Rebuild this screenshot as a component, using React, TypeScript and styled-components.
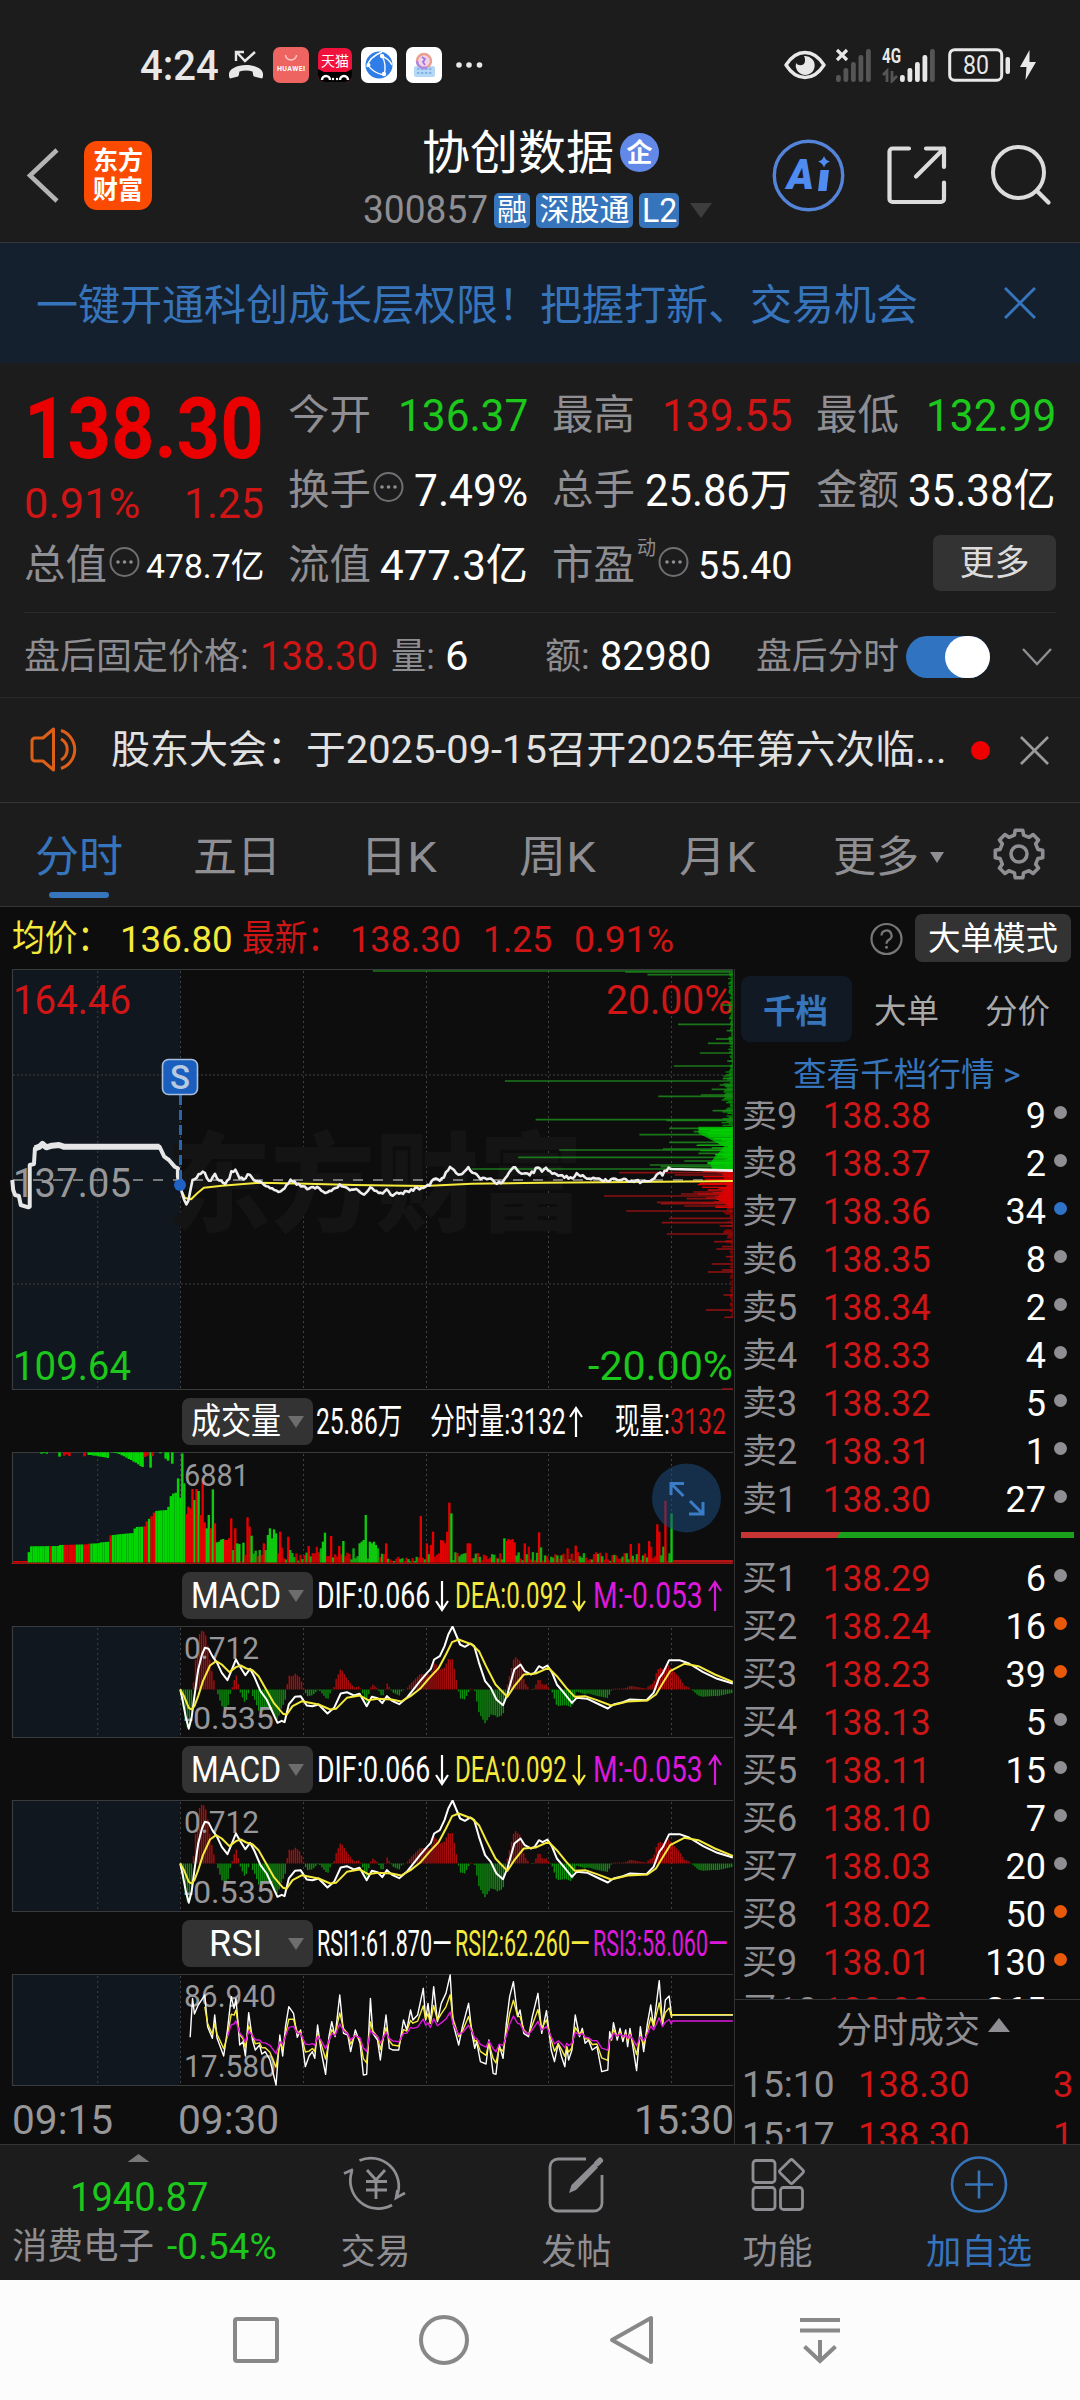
import { ReactNode, useLayoutEffect, useRef, useState } from "react"
import styled, { createGlobalStyle } from "styled-components"

const RED = '#cf1515'
const GREEN = '#1bc81b'
const GREY = '#8e8e93'
const BLUE = '#3674bc'
const YELLOW = '#f5ea3c'
const PINK = '#dd18dd'

const GlobalStyle = createGlobalStyle`
    * { box-sizing: border-box; }
    body {
        margin: 0;
        background: #1c1c1c;
        font-family: Roboto, "Noto Sans CJK SC", sans-serif;
    }
    svg { display: block; flex: none; }
`

/* ---------- text that squeezes itself into a fixed width ---------- */

interface FitProps {
    w: number
    size: number
    color?: string
    weight?: number
    ml?: number
    children: ReactNode
}
const FitBox = styled.span<{ $w: number, $size: number, $color: string, $weight: number, $ml: number }>`
    display: block;
    flex: none;
    width: ${props => props.$w}px;
    margin-left: ${props => props.$ml}px;
    font-size: ${props => props.$size}px;
    font-weight: ${props => props.$weight};
    color: ${props => props.$color};
    line-height: 1;
    white-space: pre;
`
const FitInner = styled.span`
    display: inline-block;
    transform-origin: 0 50%;
`
const Fit = ({ w, size, color = '#fff', weight = 400, ml = 0, children }: FitProps) => {
    const ref = useRef<HTMLSpanElement>(null)
    const [scale, setScale] = useState(1)

    useLayoutEffect(() => {
        if (ref.current) setScale(w / ref.current.offsetWidth)
    }, [w, children])

    return <FitBox $w={w} $size={size} $color={color} $weight={weight} $ml={ml}>
        <FitInner ref={ref} style={{ transform: `scaleX(${scale})` }}>{children}</FitInner>
    </FitBox>
}

/* ---------- status bar ---------- */

const Screen = styled.div`
    width: 1080px;
    height: 2400px;
    display: flex;
    flex-direction: column;
    overflow: hidden;
    background: #1c1c1c;
`
const StatusBar = styled.div`
    height: 130px;
    flex: none;
    display: flex;
    align-items: center;
    justify-content: space-between;
    padding: 0 44px 0 140px;
`
const StatusGroup = styled.div<{ $gap: number }>`
    display: flex;
    align-items: center;
    gap: ${props => props.$gap}px;
    height: 40px;
`
const AppIcon = styled.div<{ $bg: string, $size: number }>`
    width: ${props => props.$size}px;
    height: ${props => props.$size}px;
    border-radius: 7px;
    overflow: hidden;
    background: ${props => props.$bg};
    flex: none;
`

const SIGNAL_HEIGHTS = [7, 14, 20, 27, 33]

const Signal = ({ lit, left, mark }: { lit: number, left: number, mark: ReactNode }) => (
    <svg width={54 - left} height="36" viewBox={`${left} 0 ${54 - left} 36`}>
        {SIGNAL_HEIGHTS.map((h, i) => (
            <rect key={i} x={18 + i * 7.5} y={35 - h} width="4.8" height={h} rx="2.2" fill={i < lit ? '#e8e8e8' : '#555'} />
        ))}
        {mark}
    </svg>
)

const Status = () => (
    <StatusBar>
        <StatusGroup $gap={9}>
            <Fit w={79} size={43} color="#e8e8e8" weight={500}>4:24</Fit>
            <svg width="36" height="30" viewBox="0 0 36 30">
                <path d="M8 11V2h8M9 2.500l8 8.500L27 2" fill="none" stroke="#e8e8e8" strokeWidth="2.400" />
                <path d="M1 24c0-5 8-9 17-9s17 4 17 9c0 2 0 4-1 4.500l-8-2c-1-.5-1-3-1.500-5-4-1.500-9-1.500-13 0-.5 2-.5 4.500-1.500 5l-8 2C1 28 1 26 1 24z" fill="#e8e8e8" />
            </svg>
            <AppIcon $bg="#ee6460" $size={36}>
                <svg width="36" height="36" viewBox="0 0 36 36">
                    <path d="M12.500 8a5.500 5 0 0 0 11 0" fill="none" stroke="#fcc" strokeWidth="1.400" />
                    <text x="4" y="24" fontSize="7" fontWeight="700" fill="#fff" textLength="28">HUAWEI</text>
                </svg>
            </AppIcon>
            <AppIcon $bg="#f0123c" $size={34}>
                <svg width="34" height="34" viewBox="0 0 34 34">
                    <text x="3" y="18" fontSize="14" fill="#fff" textLength="28">天猫</text>
                    <path d="M0 21l6 3h22l6-3v13H0z" fill="#000" />
                    <path d="M4 32a4 4 0 0 1 8 0M22 32a4 4 0 0 1 8 0" fill="none" stroke="#fff" strokeWidth="2.500" />
                    <circle cx="15" cy="31" r="1.200" fill="#fff" /><circle cx="19" cy="31" r="1.200" fill="#fff" />
                </svg>
            </AppIcon>
            <AppIcon $bg="#fff" $size={36}>
                <svg width="36" height="36" viewBox="0 0 36 36">
                    <circle cx="18" cy="18" r="13.500" fill="#2f7de8" />
                    <path d="M21 5Q8 10 6 20M21 9Q26 18 23 28M7 18Q12 26 23 28M21 9Q28 12 31 18" fill="none" stroke="#fff" strokeWidth="1.400" />
                    <circle cx="21" cy="9" r="2.200" fill="#fff" /><circle cx="7.500" cy="18" r="2" fill="#fff" /><circle cx="23" cy="27" r="2.200" fill="#fff" />
                </svg>
            </AppIcon>
            <AppIcon $bg="#fff" $size={36}>
                <svg width="36" height="36" viewBox="0 0 36 36">
                    <rect x="8" y="19" width="21" height="11" rx="2" fill="#b5d8f7" />
                    <path d="M11 22h15M11 26h15" stroke="#7fb6ee" strokeWidth="1.800" strokeDasharray="2.500 1.500" />
                    <circle cx="18" cy="14" r="7" fill="#f3d3ea" stroke="#eba08e" strokeWidth="2.400" />
                    <path d="M11 14a7 7 0 0 0 10 6.300" stroke="#a98be6" strokeWidth="2.400" fill="none" />
                    <path d="M16 10l3 2-2 3 2 3" stroke="#9b7ae0" strokeWidth="1.800" fill="none" />
                </svg>
            </AppIcon>
            <svg width="40" height="8" viewBox="0 0 40 8">
                <circle cx="8" cy="4" r="2.800" fill="#e8e8e8" /><circle cx="18" cy="4" r="2.800" fill="#e8e8e8" /><circle cx="28.500" cy="4" r="2.800" fill="#e8e8e8" />
            </svg>
        </StatusGroup>
        <StatusGroup $gap={10}>
            <svg width="42" height="30" viewBox="0 0 42 30">
                <path d="M2 15Q10 2.500 21 2.500T40 15Q32 27.500 21 27.500T2 15z" fill="none" stroke="#e8e8e8" strokeWidth="3.400" strokeLinejoin="round" />
                <path d="M21 6a9.500 9.500 0 1 1-9 7c2 3 7 3 8.500 0 1-2.500.5-5-.5-7z" fill="#e8e8e8" />
            </svg>
            <Signal lit={0} left={18} mark={<path d="M19 3l10 10M29 3L19 13" stroke="#e8e8e8" strokeWidth="3.200" />} />
            <Signal lit={4} left={0} mark={<>
                <text x="0" y="16" fontSize="20" fontWeight="700" fill="#e8e8e8" textLength="19" lengthAdjust="spacingAndGlyphs">4G</text>
                <path d="M1 28l4-4v11M10 24v10l5-5" fill="none" stroke="#555" strokeWidth="2.800" />
            </>} />
            <svg width="64" height="36" viewBox="0 0 64 36">
                <rect x="3.700" y="2.700" width="52" height="30.500" rx="5" fill="none" stroke="#e8e8e8" strokeWidth="3" />
                <rect x="59.500" y="10" width="4.500" height="17" rx="2" fill="#e8e8e8" />
                <text x="17" y="27" fontSize="25" fontWeight="400" fill="#e8e8e8" textLength="26" lengthAdjust="spacingAndGlyphs">80</text>
            </svg>
            <svg width="16" height="30" viewBox="0 0 16 30"><path d="M9.500 0L0 17h6.500L5.500 30 16 12H9.500z" fill="#e8e8e8" /></svg>
        </StatusGroup>
    </StatusBar>
)

/* ---------- title bar ---------- */

const TitleBar = styled.header`
    height: 113px;
    flex: none;
    display: flex;
    padding-left: 25px;
    border-bottom: 1px solid #333537;
`
const BackIcon = styled.div`
    width: 35px;
    padding-top: 17px;
`
const Logo = styled.div`
    width: 68px;
    height: 69px;
    margin: 11px 0 0 24px;
    border-radius: 13px;
    background: #fb4a02;
    display: flex;
    flex-direction: column;
    align-items: center;
    justify-content: center;
    gap: 3px;
`
const StockTitle = styled.div`
    width: 360px;
    margin-left: 210px;
`
const NameLine = styled.div`
    display: flex;
    align-items: center;
    height: 45px;
    padding-left: 60px;
`
const CodeLine = styled.div`
    display: flex;
    align-items: center;
    height: 36px;
    margin-top: 17px;
    padding-left: 1px;
`
const Verified = styled.span`
    width: 39px;
    height: 39px;
    margin-left: 6px;
    border-radius: 50%;
    background: #6389e8;
    display: flex;
    align-items: center;
    justify-content: center;
`
const Tag = styled.span<{ $w: number }>`
    width: ${props => props.$w}px;
    height: 35px;
    margin-left: 6px;
    border-radius: 5px;
    background: ${BLUE};
    display: flex;
    align-items: center;
    justify-content: center;
`
const TitleActions = styled.div`
    display: flex;
    margin-left: 50px;
    padding-top: 9px;
`

const Title = () => (
    <TitleBar>
        <BackIcon>
            <svg width="35" height="58" viewBox="0 0 35 58"><path d="M32 3L5 28.500 32 54" fill="none" stroke="#b4b4b4" strokeWidth="4.500" /></svg>
        </BackIcon>
        <Logo>
            <Fit w={50} size={26} weight={700}>东方</Fit>
            <Fit w={50} size={26} weight={700}>财富</Fit>
        </Logo>
        <StockTitle>
            <NameLine>
                <Fit w={192} size={47}>协创数据</Fit>
                <Verified><Fit w={26} size={26} weight={700}>企</Fit></Verified>
            </NameLine>
            <CodeLine>
                <Fit w={125} size={38} color={GREY}>300857</Fit>
                <Tag $w={36}><Fit w={30} size={30}>融</Fit></Tag>
                <Tag $w={97}><Fit w={90} size={30}>深股通</Fit></Tag>
                <Tag $w={40}><Fit w={35} size={33}>L2</Fit></Tag>
                <svg width="34" height="16" viewBox="0 0 34 16"><path d="M11 1h22L22 16z" fill="#3d3d3d" /></svg>
            </CodeLine>
        </StockTitle>
        <TitleActions>
            <svg width="102" height="74" viewBox="0 0 102 74">
                <circle cx="36.500" cy="36.500" r="34.200" fill="none" stroke="#5484da" strokeWidth="3.400" />
                <text x="15" y="50" fontSize="42" fontStyle="italic" fontWeight="900" fill="#4f8bf0" textLength="27" lengthAdjust="spacingAndGlyphs">A</text>
                <path d="M48.500 31h8.500l-2.500 21H46z" fill="#4f8bf0" />
                <path d="M52 17q1.500 4.500 6 5.500-4.500 1.500-6 6-1.500-4.500-6-6 4.500-1 6-5.500z" fill="#4f8bf0" />
            </svg>
            <svg width="95" height="74" viewBox="0 0 95 74">
                <path d="M35 9.500H18.500a3 3 0 0 0-3 3V60a3 3 0 0 0 3 3H67a3 3 0 0 0 3-3V43.500M52 9.500h18V28M70 9.500L42 37.500" fill="none" stroke="#dcdcdc" strokeWidth="4.200" strokeLinecap="round" strokeLinejoin="round" />
            </svg>
            <svg width="86" height="74" viewBox="0 0 86 74">
                <circle cx="49.500" cy="33.500" r="25.500" fill="none" stroke="#dcdcdc" strokeWidth="4" />
                <path d="M68 52l11.500 11.500" stroke="#dcdcdc" strokeWidth="4.200" strokeLinecap="round" />
            </svg>
        </TitleActions>
    </TitleBar>
)

const Banner = styled.div`
    height: 120px;
    flex: none;
    background: #15202e;
    display: flex;
    align-items: center;
    padding-left: 36px;
`
const BannerText = styled.div`
    padding-top: 5px;
`
const CloseIcon = ({ size, color, ml }: { size: number, color: string, ml: number }) => (
    <svg width={size} height={size} viewBox="0 0 30 30" style={{ marginLeft: ml }}>
        <path d="M1 1l28 28M29 1L1 29" stroke={color} strokeWidth="2.800" />
    </svg>
)

/* ---------- quote ---------- */

const QuotePanel = styled.section`
    height: 250px;
    flex: none;
    margin: 0 24px;
    padding-top: 15px;
    border-bottom: 1px solid #29292a;
    display: grid;
    grid-template-columns: repeat(4, 240px);
    grid-template-rows: repeat(3, 75px);
    column-gap: 24px;
`
const QuoteCell = styled.div`
    display: flex;
    align-items: center;
    justify-content: space-between;
`
const LabelGroup = styled.div`
    display: flex;
    align-items: center;
    gap: 2px;
`
const PriceCell = styled.div`
    grid-row: span 2;
    display: flex;
    flex-direction: column;
`
const BigPrice = styled.div`
    height: 102px;
    display: flex;
    align-items: center;
    justify-content: flex-end;
`
const PriceChange = styled.div`
    height: 46px;
    display: flex;
    align-items: center;
    justify-content: space-between;
`
const SmallMark = styled.span`
    align-self: flex-start;
    margin-top: -7px;
`
const MoreButton = styled.button`
    width: 123px;
    height: 56px;
    margin: 7px 0 0 auto;
    padding: 0;
    border: 0;
    border-radius: 7px;
    background: #333;
    font-family: inherit;
    display: flex;
    align-items: center;
    justify-content: center;
`
const InfoDots = () => (
    <svg width="32" height="38" viewBox="0 0 32 38">
        <circle cx="15.500" cy="15" r="14" fill="none" stroke="#6f6f73" strokeWidth="2" />
        <circle cx="9" cy="15" r="1.800" fill="#8e8e93" /><circle cx="15.500" cy="15" r="1.800" fill="#8e8e93" /><circle cx="22" cy="15" r="1.800" fill="#8e8e93" />
    </svg>
)

const Quote = () => (
    <QuotePanel>
        <PriceCell>
            <BigPrice><Fit w={240} size={86} weight={700} color="#ea0000">138.30</Fit></BigPrice>
            <PriceChange>
                <Fit w={116} size={43} color={RED}>0.91%</Fit>
                <Fit w={80} size={43} color={RED}>1.25</Fit>
            </PriceChange>
        </PriceCell>
        <QuoteCell><Fit w={83} size={41} color={GREY}>今开</Fit><Fit w={130} size={44} color={GREEN}>136.37</Fit></QuoteCell>
        <QuoteCell><Fit w={83} size={41} color={GREY}>最高</Fit><Fit w={130} size={44} color={RED}>139.55</Fit></QuoteCell>
        <QuoteCell><Fit w={83} size={41} color={GREY}>最低</Fit><Fit w={130} size={44} color={GREEN}>132.99</Fit></QuoteCell>
        <QuoteCell><LabelGroup><Fit w={83} size={41} color={GREY}>换手</Fit><InfoDots /></LabelGroup><Fit w={114} size={44}>7.49%</Fit></QuoteCell>
        <QuoteCell><Fit w={83} size={41} color={GREY}>总手</Fit><Fit w={147} size={44}>25.86万</Fit></QuoteCell>
        <QuoteCell><Fit w={83} size={41} color={GREY}>金额</Fit><Fit w={148} size={44}>35.38亿</Fit></QuoteCell>
        <QuoteCell><LabelGroup><Fit w={83} size={41} color={GREY}>总值</Fit><InfoDots /></LabelGroup><Fit w={118} size={34}>478.7亿</Fit></QuoteCell>
        <QuoteCell><Fit w={83} size={41} color={GREY}>流值</Fit><Fit w={148} size={43}>477.3亿</Fit></QuoteCell>
        <QuoteCell>
            <LabelGroup>
                <Fit w={83} size={41} color={GREY}>市盈</Fit>
                <SmallMark><Fit w={19} size={20} color={GREY}>动</Fit></SmallMark>
                <InfoDots />
            </LabelGroup>
            <Fit w={94} size={38}>55.40</Fit>
        </QuoteCell>
        <MoreButton><Fit w={70} size={35} color="#dcdcdc">更多</Fit></MoreButton>
    </QuotePanel>
)

const AfterHours = styled.div`
    height: 85px;
    flex: none;
    display: flex;
    align-items: center;
    padding: 3px 0 0 24px;
    border-bottom: 1px solid #29292a;
`
const Toggle = styled.span`
    width: 84px;
    height: 42px;
    margin-left: 7px;
    border-radius: 21px;
    background: #2f73c1;
    display: flex;
    justify-content: flex-end;
`
const Knob = styled.span`
    width: 45px;
    height: 42px;
    border-radius: 22px;
    background: #fff;
`
const Notice = styled.div`
    height: 105px;
    flex: none;
    display: flex;
    align-items: center;
    padding-left: 30px;
    border-bottom: 1px solid #333435;
`
const RedDot = styled.span`
    width: 19px;
    height: 19px;
    margin-left: 25px;
    border-radius: 50%;
    background: #ee0000;
`

/* ---------- period tabs ---------- */

const Tabs = styled.nav`
    height: 104px;
    flex: none;
    display: flex;
    border-bottom: 1px solid #333435;
`
const Tab = styled.div<{ $w: number, $active?: boolean }>`
    width: ${props => props.$w}px;
    display: flex;
    flex-direction: column;
    align-items: center;
    padding-top: 33px;
    gap: 13px;
    &::after {
        content: '';
        width: 60px;
        height: 6px;
        border-radius: 3px;
        background: ${props => props.$active ? '#3674bc' : 'transparent'};
    }
`
const MoreTab = styled.div`
    display: flex;
    align-items: flex-start;
    padding: 33px 0 0 33px;
`
const Gear = styled.div`
    padding: 24px 0 0 48px;
`
const PERIODS = [
    { text: '分时', w: 158, tw: 88 },
    { text: '五日', w: 158, tw: 88 },
    { text: '日K', w: 164, tw: 77 },
    { text: '周K', w: 154, tw: 77 },
    { text: '月K', w: 166, tw: 77 },
]

const gearPath = () => {
    const pts: string[] = []
    for (let i = 0; i < 8; i++) {
        const a = (i * 45 - 90) * Math.PI / 180
        const put = (da: number, r: number) => pts.push(`${(27 + r * Math.cos(a + da)).toFixed(1)} ${(27 + r * Math.sin(a + da)).toFixed(1)}`)
        put(-0.24, 19.5)
        put(-0.16, 24)
        put(0.16, 24)
        put(0.24, 19.5)
    }
    return 'M' + pts.join('L') + 'Z'
}

const PeriodTabs = () => (
    <Tabs>
        {PERIODS.map((p, i) => <Tab key={p.text} $w={p.w} $active={i === 0}>
            <Fit w={p.tw} size={43} color={i === 0 ? BLUE : GREY}>{p.text}</Fit>
        </Tab>)}
        <MoreTab>
            <Fit w={86} size={43} color={GREY}>更多</Fit>
            <svg width="25" height="30" viewBox="0 0 25 30"><path d="M11 16h14l-7 11z" fill={GREY} /></svg>
        </MoreTab>
        <Gear>
            <svg width="54" height="54" viewBox="0 0 54 54">
                <path d={gearPath()} fill="none" stroke={GREY} strokeWidth="3.600" strokeLinejoin="round" />
                <circle cx="27" cy="27" r="8" fill="none" stroke={GREY} strokeWidth="3.600" />
            </svg>
        </Gear>
    </Tabs>
)

const AverageBar = styled.div`
    height: 62px;
    flex: none;
    display: flex;
    align-items: center;
    padding: 2px 0 0 12px;
    background: #0d0d0d;
`
const BigOrderButton = styled.button`
    width: 156px;
    height: 48px;
    margin: 0 0 2px 11px;
    padding: 0;
    border: 0;
    border-radius: 7px;
    background: #333;
    font-family: inherit;
    display: flex;
    align-items: center;
    justify-content: center;
`

/* ---------- charts ---------- */

type Pt = [number, number]

const path = (pts: Pt[]) => 'M' + pts.map(p => p.join(' ')).join('L')

const valueAt = (pts: Pt[], x: number) => {
    for (let i = 1; i < pts.length; i++) {
        if (x <= pts[i][0]) {
            const [x0, y0] = pts[i - 1]
            const [x1, y1] = pts[i]
            return y0 + (y1 - y0) * (x - x0) / (x1 - x0 || 1)
        }
    }
    return pts[pts.length - 1][1]
}

// repeatable noise, so that the chart is the same at every render
const noise = (n: number) => {
    const v = Math.sin(n * 127.1 + 11.7) * 43758.5453
    return v - Math.floor(v)
}

const AUCTION: Pt[] = [[26, 660], [28, 690], [32, 705], [40, 708], [44, 735], [60, 742], [63, 740], [63, 615], [72, 612], [74, 565], [84, 560], [90, 552], [98, 562], [110, 557], [125, 555], [135, 560], [338, 560], [348, 590], [358, 600], [370, 620], [377, 625], [377, 650], [382, 676]]
const PRICE: Pt[] = [[382, 676], [388, 710], [395, 737], [402, 705], [408, 660], [412, 655], [420, 645], [432, 630], [440, 657], [448, 660], [455, 642], [462, 660], [476, 672], [484, 660], [490, 637], [500, 630], [508, 652], [518, 662], [527, 635], [536, 662], [550, 665], [565, 680], [585, 695], [600, 687], [616, 662], [632, 672], [650, 687], [670, 683], [690, 700], [705, 690], [722, 673], [735, 688], [755, 687], [772, 703], [786, 678], [800, 697], [812, 704], [820, 687], [830, 704], [850, 700], [870, 690], [890, 684], [912, 674], [920, 655], [932, 664], [945, 640], [956, 617], [966, 642], [978, 647], [993, 625], [1005, 642], [1020, 655], [1037, 655], [1052, 670], [1067, 665], [1080, 635], [1090, 620], [1100, 635], [1120, 645], [1130, 637], [1140, 620], [1150, 633], [1158, 622], [1170, 640], [1195, 650], [1210, 655], [1220, 643], [1240, 651], [1280, 662], [1300, 657], [1330, 661], [1362, 666], [1380, 658], [1388, 655], [1397, 634], [1403, 645], [1410, 630], [1416, 625], [1422, 632]]
const PRICE_JAGGED: Pt[] = Array.from({ length: 241 }, (_, i) => {
    const x = 382 + i * 4.33
    return [+x.toFixed(1), +(valueAt(PRICE, x) + (noise(i) - 0.5) * 9).toFixed(1)] as Pt
}).concat([[1553, 632]])
const AVERAGE: Pt[] = [[384, 690], [392, 714], [405, 718], [418, 700], [432, 683], [470, 677], [550, 668], [650, 671], [750, 675], [900, 678], [1000, 671], [1150, 668], [1400, 665], [1553, 663]]

const ASKS: Pt[] = [[33, 790], [36, 1325], [44, 1372], [135, 1530], [193, 1437], [212, 1540], [237, 1517], [250, 1500], [279, 1483], [303, 1541], [318, 1428], [355, 1533], [363, 1070], [375, 1525], [388, 1508], [409, 1395], [405, 1485], [452, 1510], [479, 1135], [481, 1412], [505, 1418], [515, 1470], [524, 1355], [547, 1418], [555, 1480], [570, 1185], [567, 1405], [580, 1480], [592, 1098], [603, 1450], [615, 1377], [620, 1400], [627, 1000]]
const BIDS: Pt[] = [[638, 1312], [645, 1430], [665, 1462], [690, 1500], [696, 1470], [702, 1443], [708, 1280], [716, 1455], [727, 1392], [731, 1400], [738, 1450], [753, 1327], [775, 1418], [788, 1402], [798, 1525], [822, 1413], [845, 1513], [860, 1530], [867, 1518], [890, 1538], [912, 1508], [930, 1530], [936, 1500], [1005, 1533], [1050, 1496], [1072, 1535], [1287, 1530]]
const SMALL_ASKS: Pt[] = Array.from({ length: 150 }, (_, i) => {
    const y = 40 + i * 4
    const reach = y > 500 ? 75 : y > 330 ? 22 : 8
    return [y, 1553 - 2 - noise(i) * reach] as Pt
})
const SMALL_BIDS: Pt[] = Array.from({ length: 110 }, (_, i) => {
    const y = 634 + i * 4
    const reach = y < 745 ? 75 : y < 850 ? 20 : 6
    return [y, 1553 - 1 - noise(i + 300) * reach] as Pt
})

const GRID_X = [97.7, 180.5, 303.5, 426.5, 548.5, 671.5]

const Grid = ({ h }: { h: number }) => <g>
    <rect x="12" y="0" width="168.500" height={h} fill="#10171f" />
    {GRID_X.map(x => <path key={x} d={`M${x} 2V${h}`} stroke="#3f4143" strokeWidth="1" strokeDasharray="2 3" />)}
    <path d={`M733 .5H12.500V${h - 0.5}H733`} fill="none" stroke="#3a3b3d" strokeWidth="1.200" />
</g>

const ChartText = ({ x, y, w, size, color, children }: { x: number, y: number, w: number, size: number, color: string, children: string }) => (
    <text x={x} y={y} fontSize={size} fill={color} textLength={w} lengthAdjust="spacingAndGlyphs">{children}</text>
)

const Line = ({ pts, color, width }: { pts: Pt[], color: string, width: number }) => (
    <path d={path(pts)} fill="none" stroke={color} strokeWidth={width} strokeLinejoin="round" vectorEffect="non-scaling-stroke" />
)

const SX = 0.4719

const PriceChart = () => (
    <svg width="734" height="421" viewBox="0 0 734 421">
        <Grid h={421} />
        <path d="M13 106H733M13 315H733" stroke="#3f4143" strokeDasharray="2 2" />
        <text x="167" y="254" fontSize="108" fontWeight="900" fill="#141414" textLength="416" lengthAdjust="spacingAndGlyphs">东方财富</text>
        <ChartText x={13} y={44.5} w={118} size={40} color={RED}>164.46</ChartText>
        <ChartText x={606} y={44.5} w={127} size={40} color={RED}>20.00%</ChartText>
        <ChartText x={13} y={227.5} w={118} size={40} color="#97979a">137.05</ChartText>
        <ChartText x={13} y={410.5} w={118} size={40} color={GREEN}>109.64</ChartText>
        <ChartText x={588} y={410.5} w={145} size={40} color={GREEN}>-20.00%</ChartText>
        <path d="M13 211H733" stroke="#9a9a9a" strokeWidth="1.500" strokeDasharray="10 10" />
        <g transform={`translate(0 -9) scale(${SX} .33333)`}>
            {SMALL_ASKS.map(([y, x], i) => <path key={i} d={`M${x} ${y}H1553`} stroke="#00d400" strokeWidth="4" opacity={y > 500 ? 1 : .6} />)}
            {SMALL_BIDS.map(([y, x], i) => <path key={i} d={`M${x} ${y}H1553`} stroke="#e00000" strokeWidth="4" opacity={y < 745 ? 1 : .6} />)}
            {ASKS.map(([y, x], i) => <path key={i} d={`M${x} ${y}H1553`} stroke="#1c8a1c" strokeWidth="5" opacity=".85" />)}
            {BIDS.map(([y, x], i) => <path key={i} d={`M${x} ${y}H1553`} stroke="#a81212" strokeWidth="5" opacity=".8" />)}
            <path d="M1480 500H1553V632H1510L1505 610L1515 590L1535 560L1480 520z" fill="#00d400" opacity=".75" />
            <path d="M1553 634V745L1540 735L1520 715L1540 680L1530 640z" fill="#e00000" opacity=".8" />
            <Line pts={AVERAGE} color={YELLOW} width={2} />
            <Line pts={PRICE_JAGGED} color="#eee" width={2.6} />
            <Line pts={AUCTION} color="#e6e6e6" width={4} />
            <Line pts={AUCTION.slice(9, 17)} color="#e6e6e6" width={6} />
        </g>
        <path d="M180.500 126V212" stroke="#2a64ad" strokeWidth="3" strokeDasharray="10 5" />
        <circle cx="180" cy="216" r="6" fill="#1f62c4" />
        <rect x="162.500" y="90.500" width="35" height="35" rx="6" fill="#1b5fbe" stroke="#a9bedc" strokeWidth="1.600" />
        <text x="180" y="119.500" fontSize="33" fontWeight="500" fill="#b9c9e0" textAnchor="middle">S</text>
    </svg>
)

// [x, top, 1 = up (red) / 0 = down (green)]
const VOLUME_PEAKS: [number, number, number][] = [[386, 190, 0], [391, 280, 0], [396, 372, 1], [400, 350, 1], [404, 355, 1], [408, 297, 1], [412, 330, 0], [416, 297, 1], [421, 303, 0], [425, 375, 1], [429, 265, 1], [433, 397, 1], [438, 415, 0], [442, 375, 0], [446, 415, 1], [451, 298, 0], [456, 400, 1], [460, 457, 0], [465, 455, 0], [469, 449, 0], [473, 447, 0], [477, 450, 1], [481, 450, 1], [485, 445, 1], [490, 385, 1], [494, 480, 0], [498, 415, 1], [503, 460, 0], [508, 462, 0], [516, 458, 0], [525, 382, 1], [529, 410, 1], [533, 437, 0], [541, 482, 0], [550, 480, 0], [559, 460, 1], [563, 480, 0], [568, 435, 0], [572, 415, 0], [576, 445, 0], [581, 418, 0], [585, 430, 0], [594, 425, 1], [598, 473, 1], [611, 440, 1], [616, 480, 0], [655, 468, 1], [672, 470, 1], [681, 475, 0], [685, 455, 0], [689, 428, 0], [703, 438, 1], [719, 468, 1], [728, 453, 0], [750, 475, 0], [763, 460, 0], [767, 455, 0], [771, 450, 0], [776, 375, 0], [785, 455, 0], [789, 460, 0], [793, 455, 0], [798, 465, 0], [802, 475, 0], [820, 460, 1], [893, 378, 1], [906, 460, 1], [915, 465, 1], [919, 425, 1], [936, 450, 1], [941, 452, 1], [945, 460, 1], [949, 425, 1], [954, 338, 1], [958, 370, 0], [963, 487, 0], [993, 460, 1], [1067, 445, 0], [1071, 453, 1], [1076, 447, 1], [1080, 450, 1], [1085, 447, 1], [1089, 457, 1], [1097, 487, 0], [1111, 460, 1], [1119, 470, 1], [1140, 427, 1], [1145, 472, 0], [1201, 475, 1], [1218, 467, 1], [1262, 487, 1], [1335, 462, 1], [1353, 460, 1], [1374, 453, 1], [1379, 470, 1], [1392, 403, 1], [1396, 425, 1], [1404, 470, 0], [1409, 332, 1], [1423, 370, 0]]
const VOLUME_BARS = Array.from({ length: 241 }, (_, i) => {
    const x = 386 + i * 4.32
    const peak = VOLUME_PEAKS.find(p => Math.abs(p[0] - x) < 2.2)
    if (peak) return { x, top: peak[1], up: peak[2] === 1 }
    const quiet = x > 820 && x < 890
    return { x, top: quiet ? 500 + noise(i) * 14 : 486 + noise(i) * 27, up: noise(i + 900) > .55 }
})
const AUCTION_TOP: Pt[] = [[28, 513], [58, 513], [59, 469], [120, 468], [124, 465], [183, 463], [186, 461], [205, 460], [212, 457], [229, 455], [232, 436], [255, 432], [280, 429], [284, 411], [303, 410], [308, 395], [318, 380], [326, 363], [350, 360], [357, 345], [360, 313], [370, 308], [374, 266], [378, 262], [381, 358]]
const isAuctionUp = (x: number) => (x > 102 && x < 108) || (x > 133 && x < 152) || (x > 172 && x < 187) || (x > 303 && x < 313) || (x > 318 && x < 325) || (x > 231 && x < 235) || (x > 155 && x < 158) || (x > 115 && x < 119) || x < 56
const HANGING: [number, number, number][] = [[88, 191, 0], [93, 189, 0], [99, 191, 0], [126, 200, 0], [136, 197, 1], [142, 193, 1], [147, 198, 1], [179, 199, 1], [188, 195, 0], [193, 195, 0], [198, 197, 0], [203, 197, 0], [208, 199, 0], [213, 200, 0], [218, 201, 0], [223, 202, 0], [228, 204, 0], [238, 188, 0], [243, 189, 0], [248, 190, 0], [253, 192, 0], [258, 196, 0], [263, 199, 0], [268, 203, 0], [273, 207, 0], [278, 210, 0], [283, 215, 0], [288, 218, 0], [293, 223, 0], [298, 228, 0], [302, 231, 0], [307, 201, 1], [312, 197, 1], [319, 233, 0], [323, 198, 1], [340, 190, 0], [351, 206, 0], [356, 212, 0], [365, 221, 0]]

const ExpandButton = () => <g>
    <circle cx="686.500" cy="46" r="34.500" fill="#1d4a7d" opacity=".55" />
    <path d="M671 43V31.500h13M671.500 32l12 12M703 50v12h-14M702 61l-12-12" fill="none" stroke="#3a7cc6" strokeWidth="3" />
</g>

const VolumeChart = () => (
    <svg width="734" height="112" viewBox="0 0 734 112">
        <Grid h={112} />
        <g transform={`translate(0 -62) scale(${SX} .33333)`}>
            {Array.from({ length: 70 }, (_, i) => 28 + i * 5.1).map(x => (
                <rect key={x} x={x} y={valueAt(AUCTION_TOP, x)} width="5.200" height={518 - valueAt(AUCTION_TOP, x)} fill={isAuctionUp(x) ? '#e60000' : '#00d800'} />
            ))}
            {HANGING.map(([x, y, up]) => <rect key={x} x={x - 2.6} y="187" width="5.400" height={y - 187} fill={up ? '#e60000' : '#00d800'} />)}
            {VOLUME_BARS.map(b => <rect key={b.x} x={b.x - 2.2} y={b.top} width="5" height={518 - b.top} fill={b.up ? '#e60000' : '#0fc80f'} opacity={b.top < 470 ? 1 : .85} />)}
            <rect x="1426" y="510" width="127" height="8" fill="#b51414" />
            <rect x="24" y="518" width="1529" height="4" fill="#a01616" />
        </g>
        <ChartText x={184} y={34} w={65} size={31} color="#97979a">6881</ChartText>
        <ExpandButton />
    </svg>
)

const DIF: Pt[] = [[382, 900], [388, 940], [394, 985], [400, 1018], [406, 985], [412, 920], [420, 840], [428, 795], [434, 775], [442, 778], [450, 800], [460, 820], [470, 850], [482, 872], [490, 845], [500, 810], [508, 830], [520, 857], [530, 838], [540, 865], [552, 905], [565, 930], [575, 960], [588, 1000], [597, 994], [603, 998], [612, 945], [625, 922], [637, 920], [650, 948], [662, 950], [675, 945], [694, 972], [708, 955], [722, 912], [735, 908], [750, 918], [762, 913], [777, 950], [788, 922], [800, 926], [810, 941], [820, 920], [832, 935], [846, 944], [862, 925], [875, 902], [890, 875], [905, 850], [913, 838], [920, 810], [932, 800], [942, 770], [950, 735], [959, 711], [967, 738], [975, 765], [985, 772], [997, 762], [1005, 770], [1015, 820], [1028, 875], [1040, 895], [1052, 930], [1066, 947], [1075, 915], [1083, 875], [1090, 840], [1103, 825], [1112, 845], [1125, 855], [1133, 850], [1142, 830], [1150, 836], [1160, 828], [1170, 850], [1180, 885], [1195, 910], [1212, 940], [1222, 925], [1245, 928], [1270, 945], [1288, 957], [1300, 945], [1320, 938], [1335, 930], [1370, 932], [1385, 910], [1397, 865], [1405, 850], [1418, 812], [1440, 812], [1460, 822], [1490, 848], [1520, 868], [1553, 882]]
const DEA: Pt[] = [[382, 900], [390, 920], [400, 955], [406, 960], [412, 950], [420, 920], [430, 875], [445, 828], [458, 815], [470, 825], [486, 848], [500, 833], [510, 828], [522, 837], [535, 842], [548, 860], [560, 890], [580, 940], [600, 973], [607, 976], [620, 950], [640, 935], [675, 945], [700, 960], [712, 958], [735, 925], [762, 918], [780, 932], [800, 928], [830, 930], [850, 936], [870, 920], [890, 898], [910, 865], [930, 835], [945, 795], [958, 758], [972, 750], [1000, 765], [1015, 785], [1030, 830], [1050, 885], [1075, 922], [1090, 890], [1110, 855], [1135, 852], [1162, 835], [1180, 860], [1200, 895], [1218, 922], [1240, 920], [1265, 932], [1295, 948], [1330, 936], [1372, 933], [1390, 915], [1405, 880], [1420, 845], [1450, 823], [1480, 830], [1515, 855], [1553, 877]]
const HISTOGRAM = Array.from({ length: 271 }, (_, i) => {
    const x = 384 + i * 4.32
    return { x, d: 2 * (valueAt(DIF, x) - valueAt(DEA, x)) }
})

const MacdChart = () => (
    <svg width="734" height="112" viewBox="0 0 734 112">
        <Grid h={112} />
        <g transform={`translate(0 -236.500) scale(${SX} .33333)`}>
            {HISTOGRAM.map(({ x, d }) => <rect key={x} x={x - 1.4} y={d < 0 ? 900 + d : 900} width="3" height={Math.abs(d)} fill={d < 0 ? '#a80d0d' : '#0d8d0d'} />)}
        </g>
        <ChartText x={184} y={33} w={75} size={31} color="#97979a">0.712</ChartText>
        <ChartText x={184} y={103} w={90} size={31} color="#97979a">-0.535</ChartText>
        <g transform={`translate(0 -236.500) scale(${SX} .33333)`}>
            <Line pts={DIF} color="#fff" width={2} />
            <Line pts={DEA} color={YELLOW} width={2} />
        </g>
    </svg>
)

const RSI_FAST: Pt[] = [[403, 892], [408, 775], [412, 822], [420, 795], [428, 778], [434, 765], [440, 860], [450, 895], [455, 825], [460, 895], [468, 925], [474, 948], [482, 870], [490, 770], [496, 805], [500, 775], [508, 915], [515, 905], [520, 948], [527, 818], [535, 900], [541, 930], [550, 915], [555, 942], [562, 935], [572, 960], [585, 1035], [593, 885], [599, 948], [605, 860], [612, 800], [622, 820], [630, 892], [637, 870], [647, 980], [655, 948], [662, 935], [667, 955], [673, 855], [680, 930], [690, 1003], [697, 890], [703, 845], [710, 890], [720, 765], [728, 880], [737, 885], [743, 935], [753, 870], [763, 910], [770, 1005], [777, 1003], [785, 775], [790, 880], [800, 900], [806, 960], [818, 825], [825, 925], [832, 930], [845, 930], [855, 840], [862, 870], [870, 810], [875, 840], [885, 825], [897, 745], [902, 840], [907, 790], [912, 850], [919, 740], [927, 845], [935, 790], [945, 760], [954, 705], [960, 850], [972, 915], [980, 860], [993, 790], [1000, 880], [1006, 925], [1010, 905], [1018, 965], [1030, 972], [1036, 900], [1045, 1000], [1051, 1003], [1058, 915], [1066, 955], [1073, 850], [1080, 770], [1088, 725], [1097, 830], [1102, 810], [1110, 880], [1120, 890], [1128, 830], [1140, 760], [1148, 880], [1158, 812], [1168, 930], [1175, 965], [1183, 910], [1190, 950], [1197, 980], [1201, 920], [1205, 960], [1212, 930], [1219, 825], [1228, 890], [1234, 865], [1240, 910], [1247, 900], [1255, 930], [1265, 920], [1275, 995], [1288, 990], [1292, 875], [1296, 900], [1300, 848], [1308, 900], [1314, 865], [1320, 905], [1326, 870], [1330, 920], [1335, 865], [1349, 992], [1357, 860], [1364, 935], [1372, 850], [1379, 795], [1385, 860], [1397, 722], [1404, 858], [1410, 780], [1418, 768], [1423, 825]]

const damp = (k: number, keep: number, from: number): Pt[] => {
    let last = RSI_FAST[0][1]
    return RSI_FAST.map(([x, y]) => {
        last = last * keep + y * (1 - keep)
        return [x, +(888 + (last - 888) * k).toFixed(1)] as Pt
    }).filter(p => p[0] >= from)
}

const RsiChart = () => (
    <svg width="734" height="112" viewBox="0 0 734 112">
        <Grid h={112} />
        <ChartText x={184} y={33} w={92} size={31} color="#97979a">86.940</ChartText>
        <ChartText x={184} y={103} w={92} size={31} color="#97979a">17.580</ChartText>
        <g transform={`translate(0 -234) scale(${SX} .33333)`}>
            <Line pts={[...RSI_FAST, [1553, 825]]} color="#fff" width={1.4} />
            <Line pts={[...damp(.74, .25, 430), [1424, 824], [1553, 824]]} color={YELLOW} width={1.4} />
            <Line pts={[...damp(.45, .35, 480), [1424, 843], [1553, 843]]} color={PINK} width={1.4} />
        </g>
    </svg>
)

const Workspace = styled.main`
    height: 1176px;
    flex: none;
    display: flex;
    background: #0d0d0d;
    border-bottom: 1px solid #333435;
`
const ChartColumn = styled.div`
    width: 735px;
    flex: none;
    border-right: 1px solid #333435;
`
const IndicatorBar = styled.div`
    height: 62px;
    display: flex;
    align-items: center;
    padding-left: 182px;
`
const Pill = styled.span`
    width: 131px;
    height: 47px;
    border-radius: 8px;
    background: #333;
    display: flex;
    align-items: center;
    justify-content: space-between;
    padding: 1px 9px 0 9px;
`
const Legend = styled.div<{ $w: number }>`
    width: ${props => props.$w}px;
    display: flex;
    align-items: center;
`
const LegendValues = styled.div`
    display: flex;
    align-items: center;
    padding: 2px 0 0 1px;
`
const TimeAxis = styled.div`
    height: 58px;
    display: flex;
    align-items: center;
    padding: 11px 0 0 12px;
`
const Arrow = ({ up, color, ml }: { up?: boolean, color: string, ml: number }) => (
    <svg width="14" height="32" viewBox="0 0 14 32" style={{ marginLeft: ml }}>
        <path d={up ? 'M7 31V2M1 11L7 2l6 9' : 'M7 1v29M1 21l6 9 6-9'} fill="none" stroke={color} strokeWidth="2.200" />
    </svg>
)

interface IndicatorProps {
    name: string
    nameWidth: number
    legend: ReactNode
}
const Indicator = ({ name, nameWidth, legend }: IndicatorProps) => (
    <IndicatorBar>
        <Pill>
            <Fit w={nameWidth} size={36} ml={nameWidth < 70 ? 18 : 0}>{name}</Fit>
            <svg width="16" height="12" viewBox="0 0 16 12"><path d="M0 0h16L8 12z" fill="#6d6d6d" /></svg>
        </Pill>
        <LegendValues>{legend}</LegendValues>
    </IndicatorBar>
)

const macdLegend = <>
    <Legend $w={138}><Fit w={113} size={36} ml={3}>DIF:0.066</Fit><Arrow color="#fff" ml={5} /></Legend>
    <Legend $w={138}><Fit w={112} size={36} ml={3} color={YELLOW}>DEA:0.092</Fit><Arrow color={YELLOW} ml={5} /></Legend>
    <Legend $w={138}><Fit w={110} size={36} ml={3} color={PINK}>M:-0.053</Fit><Arrow up color={PINK} ml={5} /></Legend>
</>

const Charts = () => (
    <ChartColumn>
        <PriceChart />
        <Indicator name="成交量" nameWidth={90} legend={<>
            <Fit w={86} size={36} ml={2}>25.86万</Fit>
            <Fit w={136} size={36} ml={28}>分时量:3132</Fit>
            <Arrow up color="#fff" ml={3} />
            <Fit w={55} size={36} ml={32}>现量:</Fit>
            <Fit w={56} size={36} color={RED}>3132</Fit>
        </>} />
        <VolumeChart />
        <Indicator name="MACD" nameWidth={90} legend={macdLegend} />
        <MacdChart />
        <Indicator name="MACD" nameWidth={90} legend={macdLegend} />
        <MacdChart />
        <Indicator name="RSI" nameWidth={53} legend={<>
            <Legend $w={138}><Fit w={115} size={36} ml={3}>RSI1:61.870</Fit><Fit w={20} size={36}>—</Fit></Legend>
            <Legend $w={138}><Fit w={115} size={36} ml={3} color={YELLOW}>RSI2:62.260</Fit><Fit w={20} size={36} color={YELLOW}>—</Fit></Legend>
            <Legend $w={138}><Fit w={115} size={36} ml={3} color={PINK}>RSI3:58.060</Fit><Fit w={20} size={36} color={PINK}>—</Fit></Legend>
        </>} />
        <RsiChart />
        <TimeAxis>
            <Fit w={101} size={41} color="#97979a">09:15</Fit>
            <Fit w={101} size={41} color="#97979a" ml={65}>09:30</Fit>
            <Fit w={100} size={41} color="#97979a" ml={355}>15:30</Fit>
        </TimeAxis>
    </ChartColumn>
)

/* ---------- order book ---------- */

interface Level {
    name: string
    price: string
    qty: number
    dot?: string
}
const SELLS: Level[] = [
    { name: '卖9', price: '138.38', qty: 9 },
    { name: '卖8', price: '138.37', qty: 2 },
    { name: '卖7', price: '138.36', qty: 34, dot: '#2f73c8' },
    { name: '卖6', price: '138.35', qty: 8 },
    { name: '卖5', price: '138.34', qty: 2 },
    { name: '卖4', price: '138.33', qty: 4 },
    { name: '卖3', price: '138.32', qty: 5 },
    { name: '卖2', price: '138.31', qty: 1 },
    { name: '卖1', price: '138.30', qty: 27 },
]
const BUYS: Level[] = [
    { name: '买1', price: '138.29', qty: 6 },
    { name: '买2', price: '138.24', qty: 16, dot: '#e8590c' },
    { name: '买3', price: '138.23', qty: 39, dot: '#e8590c' },
    { name: '买4', price: '138.13', qty: 5 },
    { name: '买5', price: '138.11', qty: 15 },
    { name: '买6', price: '138.10', qty: 7 },
    { name: '买7', price: '138.03', qty: 20 },
    { name: '买8', price: '138.02', qty: 50, dot: '#e8590c' },
    { name: '买9', price: '138.01', qty: 130, dot: '#e8590c' },
    { name: '买10', price: '138.00', qty: 265 },
]

const Book = styled.aside`
    flex: 1;
    display: flex;
    flex-direction: column;
`
const BookTabs = styled.div`
    display: flex;
    padding: 7px 0 0 6px;
    height: 73px;
    flex: none;
`
const BookTab = styled.div<{ $active?: boolean }>`
    width: 111px;
    height: 66px;
    border-radius: 9px;
    background: ${props => props.$active ? '#111a24' : 'transparent'};
    display: flex;
    align-items: center;
    justify-content: center;
    padding: 5px 2px 0 0;
`
const BookLink = styled.div`
    height: 59px;
    flex: none;
    padding: 16px 0 0 58px;
`
const Levels = styled.div<{ $h: number, $from: 'start' | 'end' }>`
    height: ${props => props.$h}px;
    flex: none;
    overflow: hidden;
    display: flex;
    flex-direction: column;
    justify-content: flex-${props => props.$from};
`
const LevelRow = styled.div`
    height: 48px;
    flex: none;
    display: flex;
    align-items: center;
    padding: 3px 0 0 7px;
`
const LevelName = styled.span`
    width: 80px;
    flex: none;
    display: flex;
`
const Qty = styled.span`
    margin-left: auto;
    font-size: 36px;
    line-height: 1;
    color: #fff;
`
const Dot = styled.span<{ $color: string }>`
    width: 13px;
    height: 13px;
    margin: 0 13px 6px 8px;
    border-radius: 50%;
    background: ${props => props.$color};
`
const Ratio = styled.div`
    height: 6px;
    flex: none;
    margin: 10px 6px 15px;
    background: linear-gradient(125deg, #c63433 0 81px, #1ba01b 82px);
`
const TradesHead = styled.div`
    height: 60px;
    flex: none;
    display: flex;
    align-items: center;
    padding: 2px 0 0 101px;
    border-top: 1px solid #333435;
`
const Trade = styled.div`
    height: 51px;
    flex: none;
    display: flex;
    align-items: center;
    padding-left: 7px;
`
const Trades = styled.div`
    flex: 1;
    overflow: hidden;
`

const LevelItem = ({ level }: { level: Level }) => (
    <LevelRow>
        <LevelName>
            <Fit w={35} size={34} color={GREY}>{level.name[0]}</Fit>
            <Fit w={level.name.length > 2 ? 40 : 20} size={36} color={GREY}>{level.name.slice(1)}</Fit>
        </LevelName>
        <Fit w={108} size={36} color={RED} ml={1}>{level.price}</Fit>
        <Qty>{level.qty}</Qty>
        <Dot $color={level.dot || GREY} />
    </LevelRow>
)

const OrderBook = () => (
    <Book>
        <BookTabs>
            <BookTab $active><Fit w={65} size={33} color={BLUE} weight={700}>千档</Fit></BookTab>
            <BookTab><Fit w={65} size={33} color="#a9a9a9">大单</Fit></BookTab>
            <BookTab><Fit w={65} size={33} color="#a9a9a9">分价</Fit></BookTab>
        </BookTabs>
        <BookLink><Fit w={227} size={33} color={BLUE}>查看千档行情 &gt;</Fit></BookLink>
        <Levels $h={421} $from="end">{SELLS.map(l => <LevelItem key={l.name} level={l} />)}</Levels>
        <Ratio />
        <Levels $h={446} $from="start">{BUYS.map(l => <LevelItem key={l.name} level={l} />)}</Levels>
        <TradesHead>
            <Fit w={144} size={36} color={GREY}>分时成交</Fit>
            <svg width="30" height="26" viewBox="0 0 30 26"><path d="M19 0l11 14H8z" fill={GREY} /></svg>
        </TradesHead>
        <Trades>
            <Trade><Fit w={93} size={36} color={GREY}>15:10</Fit><Fit w={112} size={36} color={RED} ml={23}>138.30</Fit><Fit w={20} size={36} color={RED} ml={83}>3</Fit></Trade>
            <Trade><Fit w={93} size={36} color={GREY}>15:17</Fit><Fit w={112} size={36} color={RED} ml={23}>138.30</Fit><Fit w={20} size={36} color={RED} ml={83}>1</Fit></Trade>
        </Trades>
    </Book>
)

/* ---------- bottom bars ---------- */

const BottomBar = styled.footer`
    height: 135px;
    flex: none;
    display: flex;
`
const Sector = styled.div`
    width: 275px;
    display: flex;
    flex-direction: column;
    padding: 9px 0 0 12px;
`
const SectorLine = styled.div`
    display: flex;
    align-items: center;
    height: 49px;
    margin-top: 11px;
    & + & {
        margin-top: 0;
    }
`
const Action = styled.div`
    width: 201px;
    display: flex;
    flex-direction: column;
    align-items: center;
    padding-top: 3px;
    gap: 17px;
`
const AndroidNav = styled.div`
    height: 120px;
    flex: none;
    display: flex;
    align-items: center;
    padding-left: 162px;
    background: #fcfcfc;
`
const NavKey = styled.div`
    width: 188px;
    display: flex;
    justify-content: center;
`

const ACTIONS = [
    {
        text: '交易', w: 70, icon: <g fill="none" stroke={GREY} strokeWidth="2.700">
            <path d="M20.500 12.500A28 28 0 0 1 58 48M53 57A28 28 0 0 1 13 23M5 25.500l9-4M66 45l-9 5 1.500-8" />
            <path d="M28 22l9 10 9-10M27 33.500h21M27 42h21M37 32v19" strokeWidth="2.900" />
        </g>
    },
    {
        text: '发帖', w: 70, icon: <g>
            <path d="M46 11H18a8 8 0 0 0-8 8v36a8 8 0 0 0 8 8h36a8 8 0 0 0 8-8V27" fill="none" stroke={GREY} strokeWidth="2.800" />
            <path d="M29 45l2.500-8L53.500 15.500l4.500 4L36 42z" fill={GREY} />
            <path d="M57 15.500l3-3" stroke={GREY} strokeWidth="6" strokeLinecap="round" />
        </g>
    },
    {
        text: '功能', w: 70, icon: <g fill="none" stroke={GREY} strokeWidth="2.800">
            <rect x="12" y="12.500" width="22" height="22" rx="3" />
            <rect x="12" y="39.500" width="22" height="22" rx="3" />
            <rect x="39.500" y="39.500" width="22" height="22" rx="3" />
            <rect x="41.500" y="14.500" width="18" height="18" rx="2" transform="rotate(45 50.500 23.500)" />
        </g>
    },
    {
        text: '加自选', w: 106, icon: <g fill="none" stroke={BLUE} strokeWidth="2.600">
            <circle cx="37" cy="36.500" r="27" />
            <path d="M23 36.500h28M37 22.500v28" />
        </g>
    },
]

export default function App() {
    return <Screen>
        <GlobalStyle />
        <Status />
        <Title />
        <Banner>
            <BannerText><Fit w={882} size={42} color={BLUE}>一键开通科创成长层权限！把握打新、交易机会</Fit></BannerText>
            <CloseIcon size={32} color={BLUE} ml={86} />
        </Banner>
        <Quote />
        <AfterHours>
            <Fit w={225} size={36} color={GREY}>盘后固定价格:</Fit>
            <Fit w={118} size={40} color={RED} ml={11}>138.30</Fit>
            <Fit w={44} size={36} color={GREY} ml={13}>量:</Fit>
            <Fit w={23} size={40} ml={10}>6</Fit>
            <Fit w={45} size={36} color={GREY} ml={77}>额:</Fit>
            <Fit w={111} size={40} ml={10}>82980</Fit>
            <Fit w={143} size={36} color={GREY} ml={45}>盘后分时</Fit>
            <Toggle><Knob /></Toggle>
            <svg width="62" height="20" viewBox="0 0 62 20"><path d="M33 2l14 15L61 2" fill="none" stroke={GREY} strokeWidth="2.400" /></svg>
        </AfterHours>
        <Notice>
            <svg width="54" height="46" viewBox="0 0 54 46">
                <g fill="none" stroke="#dd6018" strokeWidth="3" strokeLinejoin="round">
                    <path d="M23.500 2v41L13 34H5a3 3 0 0 1-3-3V14a3 3 0 0 1 3-3h8z" />
                    <path d="M31 3.500a20 20 0 0 1 0 38M31 12a12 12 0 0 1 0 21" />
                </g>
            </svg>
            <Fit w={195} size={39} color="#e2e2e2" ml={27}>股东大会：</Fit>
            <Fit w={640} size={39} color="#e2e2e2">于2025-09-15召开2025年第六次临...</Fit>
            <RedDot />
            <CloseIcon size={29} color="#9a9a9a" ml={30} />
        </Notice>
        <PeriodTabs />
        <AverageBar>
            <Fit w={98} size={36} color={YELLOW}>均价：</Fit>
            <Fit w={113} size={37} color={YELLOW} ml={10}>136.80</Fit>
            <Fit w={98} size={36} color={RED} ml={9}>最新：</Fit>
            <Fit w={111} size={37} color={RED} ml={10}>138.30</Fit>
            <Fit w={69} size={37} color={RED} ml={22}>1.25</Fit>
            <Fit w={100} size={37} color={RED} ml={22}>0.91%</Fit>
            <svg width="230" height="34" viewBox="0 0 230 34">
                <circle cx="212.500" cy="17" r="15" fill="none" stroke="#77777a" strokeWidth="2.200" />
                <path d="M207.500 13.500a5 5 0 1 1 7.500 4.300q-2.500 1.400-2.500 4" fill="none" stroke="#77777a" strokeWidth="2.200" />
                <circle cx="212.500" cy="25.300" r="1.500" fill="#77777a" />
            </svg>
            <BigOrderButton><Fit w={130} size={33}>大单模式</Fit></BigOrderButton>
        </AverageBar>
        <Workspace>
            <Charts />
            <OrderBook />
        </Workspace>
        <BottomBar>
            <Sector>
                <svg width="140" height="8" viewBox="0 0 140 8"><path d="M126.500 0l11 8h-22z" fill="#77777a" /></svg>
                <SectorLine><Fit w={138} size={40} color={GREEN} ml={58}>1940.87</Fit></SectorLine>
                <SectorLine><Fit w={142} size={36} color={GREY}>消费电子</Fit><Fit w={110} size={36} color={GREEN} ml={13}>-0.54%</Fit></SectorLine>
            </Sector>
            {ACTIONS.map(a => <Action key={a.text}>
                <svg width="74" height="70" viewBox="0 0 74 70">{a.icon}</svg>
                <Fit w={a.w} size={35} color={a.text === '加自选' ? BLUE : GREY}>{a.text}</Fit>
            </Action>)}
        </BottomBar>
        <AndroidNav>
            <NavKey><svg width="50" height="50" viewBox="0 0 50 50"><rect x="4" y="4" width="42" height="42" rx="2" fill="none" stroke="#888" strokeWidth="4" /></svg></NavKey>
            <NavKey><svg width="52" height="52" viewBox="0 0 52 52"><circle cx="26" cy="26" r="23" fill="none" stroke="#888" strokeWidth="4" /></svg></NavKey>
            <NavKey><svg width="52" height="52" viewBox="0 0 52 52"><path d="M45 4v44L6 26z" fill="none" stroke="#888" strokeWidth="4" strokeLinejoin="round" /></svg></NavKey>
            <NavKey><svg width="50" height="50" viewBox="0 0 50 50"><path d="M5 5h40M5 15.500h40M25 25v21M9.500 31.500L25 46l15.500-14.500" fill="none" stroke="#888" strokeWidth="4" /></svg></NavKey>
        </AndroidNav>
    </Screen>
}
